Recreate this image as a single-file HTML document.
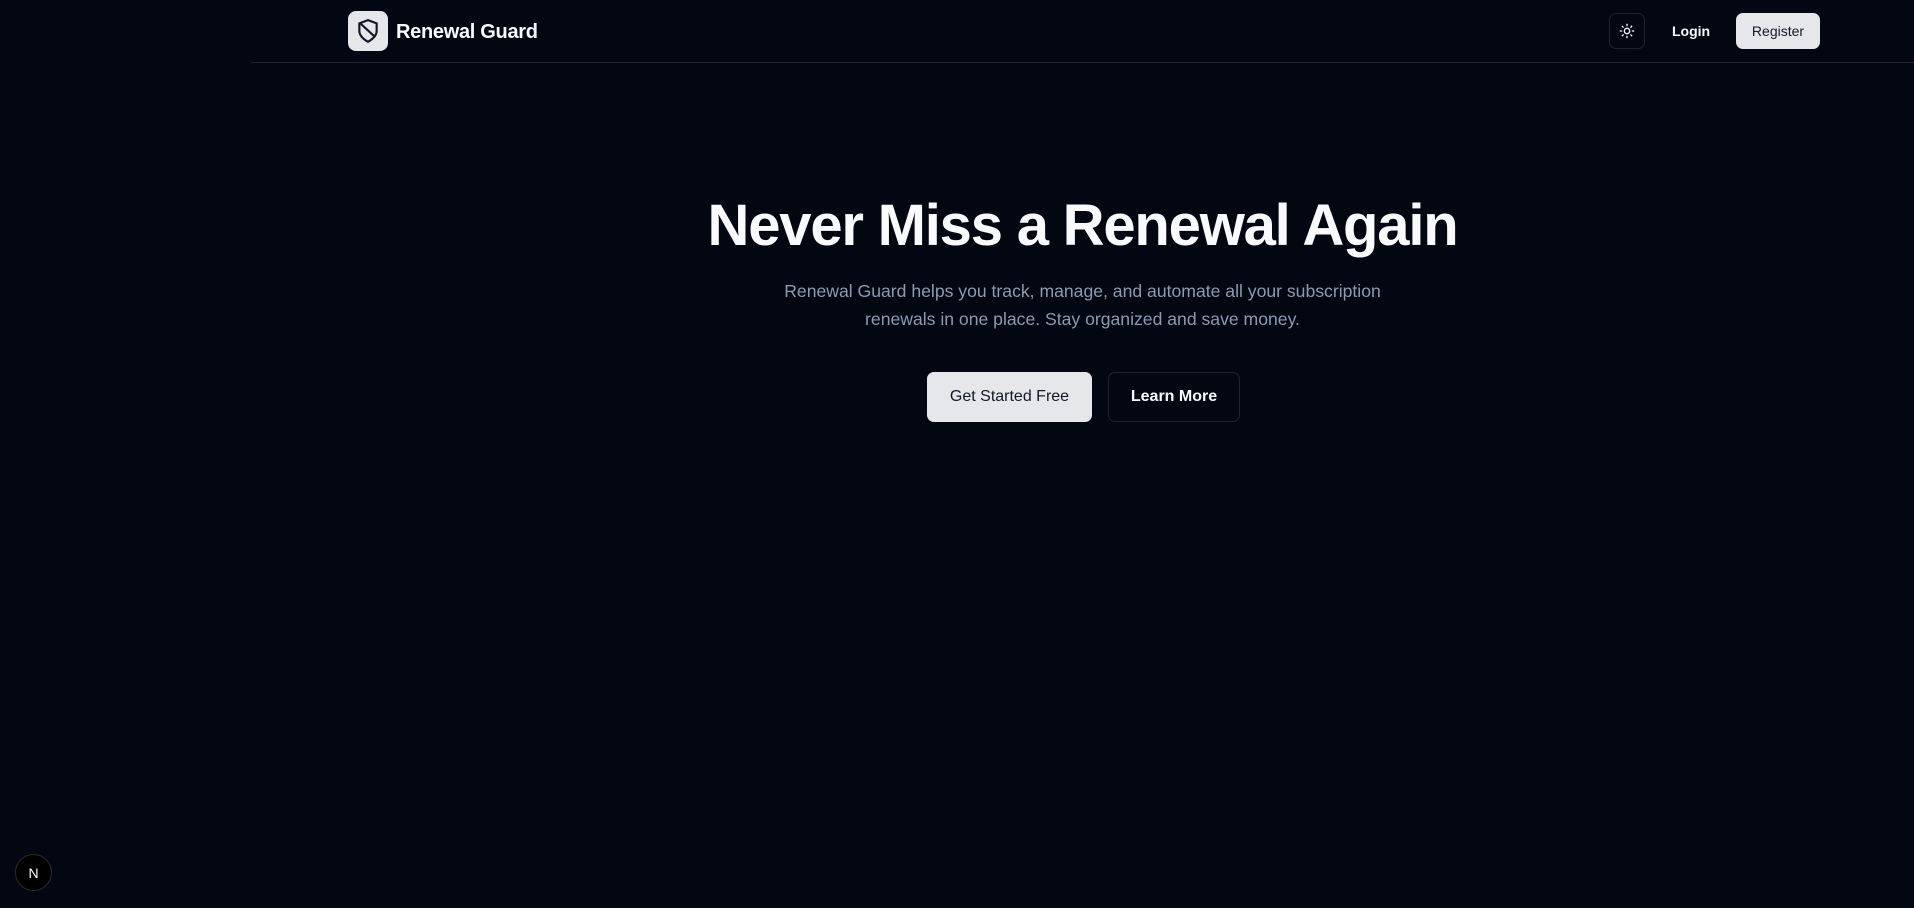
<!DOCTYPE html>
<html><head><meta charset="utf-8"><style>
*{margin:0;padding:0;box-sizing:border-box}
html,body{width:1914px;height:908px;background:#030712;overflow:hidden;font-family:"Liberation Sans",sans-serif;color:#f8fafc}
.hdr{position:absolute;left:251px;right:0;top:0;height:63px;border-bottom:1px solid #1e2330}
.logo{position:absolute;left:348px;top:11px;width:40px;height:40px;border-radius:8px;background:#e5e7eb;display:flex;align-items:center;justify-content:center}
.brand{position:absolute;left:396px;top:21px;font-size:20px;font-weight:bold;letter-spacing:-0.3px}
.theme{position:absolute;left:1609px;top:13px;width:36px;height:36px;border:1px solid #1e2330;border-radius:7px;display:flex;align-items:center;justify-content:center}
.login{position:absolute;left:1672px;top:23px;font-size:14px;font-weight:bold}
.reg{position:absolute;left:1736px;top:13px;width:84px;height:36px;border-radius:7px;background:#e5e7eb;color:#111827;font-size:14px;display:flex;align-items:center;justify-content:center}
h1{position:absolute;left:251px;right:0;top:191px;text-align:center;font-size:58px;font-weight:bold;letter-spacing:-1.2px;line-height:70px}
.sub{position:absolute;left:251px;right:0;top:277px;text-align:center;font-size:17.6px;line-height:28px;color:#8c9bb3}
.b1{position:absolute;left:927px;top:372px;width:165px;height:50px;border-radius:7px;background:#e5e7eb;color:#111827;font-size:16px;display:flex;align-items:center;justify-content:center}
.b2{position:absolute;left:1108px;top:372px;width:132px;height:50px;border-radius:7px;border:1px solid #1e2330;font-size:16px;font-weight:bold;display:flex;align-items:center;justify-content:center}
.n{position:absolute;left:15px;top:854px;width:37px;height:37px;border-radius:50%;background:#000;border:1px solid #2a2a2a;display:flex;align-items:center;justify-content:center;font-size:14px;color:#fff}
</style></head><body>
<div class="hdr"></div>
<div class="logo"><svg width="26" height="26" viewBox="0 0 24 24" fill="none" stroke="#111827" stroke-width="2" stroke-linecap="round" stroke-linejoin="round"><path d="M12 22s8-4 8-10V5l-8-3-8 3v7c0 6 8 10 8 10z"/><path d="M6 6l12 11"/></svg></div>
<div class="brand">Renewal Guard</div>
<div class="theme"><svg width="16" height="16" viewBox="0 0 24 24" fill="none" stroke="#fff" stroke-width="2" stroke-linecap="round"><circle cx="12" cy="12" r="4"/><path d="M12 2v2M12 20v2M4.9 4.9l1.4 1.4M17.7 17.7l1.4 1.4M2 12h2M20 12h2M6.3 17.7l-1.4 1.4M19.1 4.9l-1.4 1.4"/></svg></div>
<div class="login">Login</div>
<div class="reg">Register</div>
<h1>Never Miss a Renewal Again</h1>
<div class="sub">Renewal Guard helps you track, manage, and automate all your subscription<br>renewals in one place. Stay organized and save money.</div>
<div class="b1">Get Started Free</div>
<div class="b2">Learn More</div>
<div class="n">N</div>
</body></html>
